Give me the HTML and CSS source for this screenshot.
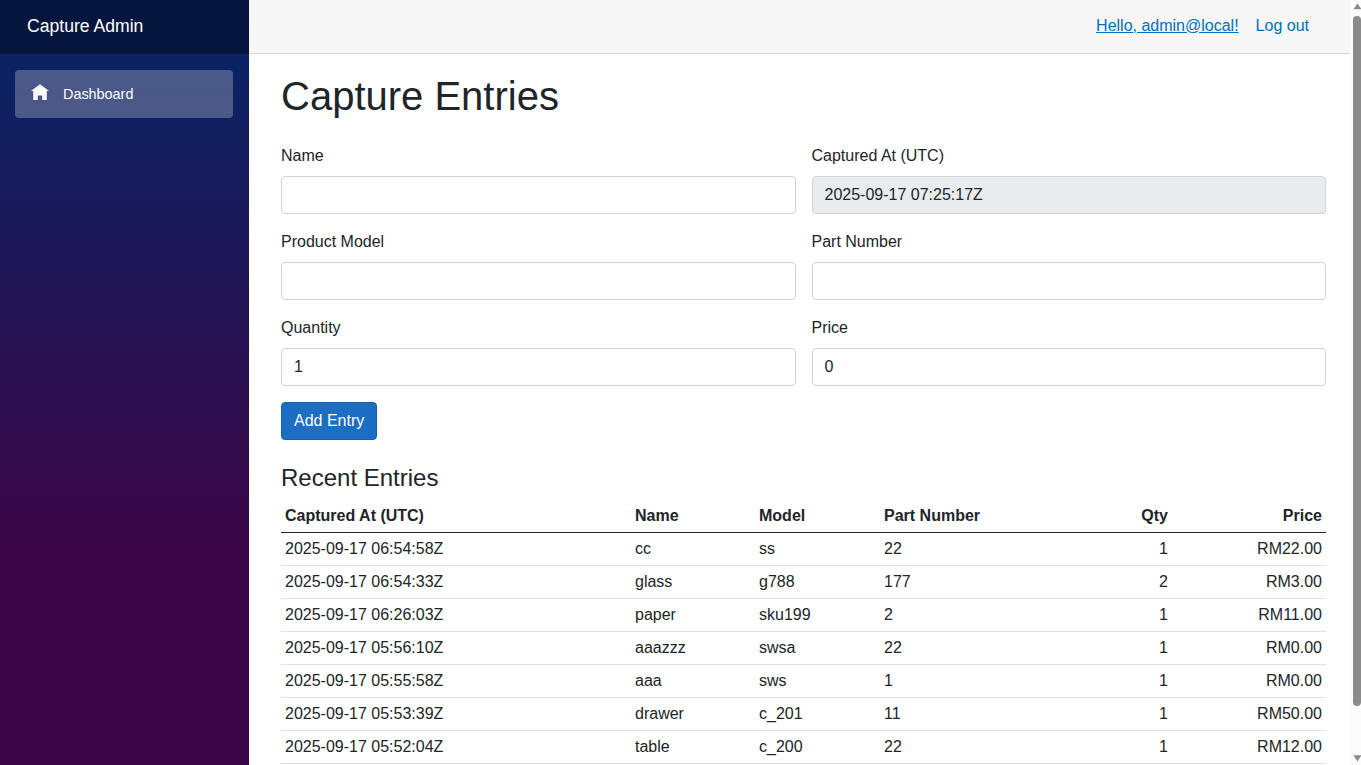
FILE: index.html
```html
<!DOCTYPE html>
<html lang="en">
<head>
<meta charset="utf-8">
<title>Capture Entries</title>
<link rel="stylesheet" href="styles.css">
</head>
<body>
<div class="page">
  <aside class="sidebar">
    <div class="brand-row"><a class="brand">Capture Admin</a></div>
    <nav class="nav">
      <a class="nav-link">
        <svg class="nav-icon" viewBox="0 0 8 7" fill="currentColor"><path d="M4 0l-4 3h1v4h2v-2h2v2h2v-4.03l1 .03-4-3z"/></svg>
        <span>Dashboard</span>
      </a>
    </nav>
  </aside>
  <main class="main">
    <header class="top-row"><a class="user">Hello, admin@local!</a><a class="logout">Log out</a></header>
    <article class="content">
      <h1>Capture Entries</h1>
      <form class="form">
        <label class="field"><span>Name</span><input class="control" type="text"></label>
        <label class="field"><span>Captured At (UTC)</span><input class="control" type="text" value="2025-09-17 07:25:17Z" disabled></label>
        <label class="field"><span>Product Model</span><input class="control" type="text"></label>
        <label class="field"><span>Part Number</span><input class="control" type="text"></label>
        <label class="field"><span>Quantity</span><input class="control" type="text" value="1"></label>
        <label class="field"><span>Price</span><input class="control" type="text" value="0"></label>
        <div class="actions"><button class="btn" type="button">Add Entry</button></div>
      </form>
      <h4>Recent Entries</h4>
      <table class="table">
        <colgroup><col class="c-date"><col class="c-name"><col class="c-model"><col class="c-part"><col class="c-qty"><col class="c-price"></colgroup>
        <thead><tr><th>Captured At (UTC)</th><th>Name</th><th>Model</th><th>Part Number</th><th class="num">Qty</th><th class="num">Price</th></tr></thead>
        <tbody>
          <tr><td>2025-09-17 06:54:58Z</td><td>cc</td><td>ss</td><td>22</td><td class="num">1</td><td class="num">RM22.00</td></tr>
          <tr><td>2025-09-17 06:54:33Z</td><td>glass</td><td>g788</td><td>177</td><td class="num">2</td><td class="num">RM3.00</td></tr>
          <tr><td>2025-09-17 06:26:03Z</td><td>paper</td><td>sku199</td><td>2</td><td class="num">1</td><td class="num">RM11.00</td></tr>
          <tr><td>2025-09-17 05:56:10Z</td><td>aaazzz</td><td>swsa</td><td>22</td><td class="num">1</td><td class="num">RM0.00</td></tr>
          <tr><td>2025-09-17 05:55:58Z</td><td>aaa</td><td>sws</td><td>1</td><td class="num">1</td><td class="num">RM0.00</td></tr>
          <tr><td>2025-09-17 05:53:39Z</td><td>drawer</td><td>c_201</td><td>11</td><td class="num">1</td><td class="num">RM50.00</td></tr>
          <tr><td>2025-09-17 05:52:04Z</td><td>table</td><td>c_200</td><td>22</td><td class="num">1</td><td class="num">RM12.00</td></tr>
        </tbody>
      </table>
    </article>
  </main>
  <div class="scrollbar">
    <svg class="arrow" viewBox="0 0 8 7"><path d="M4.5 0.5 8.5 6.2H0.4z"/></svg>
    <div class="thumb"></div>
    <svg class="arrow" viewBox="0 0 8 7"><path d="M4.5 6.5 8.5 0.2H0.4z"/></svg>
  </div>
</div>
</body>
</html>
```
FILE: styles.css
```css
* { box-sizing: border-box; }
body {
  margin: 0;
  font: 16px/1.5 "Liberation Sans", Arial, sans-serif;
  color: #212529;
  background: #fff;
  overflow: hidden;
}
.page { display: flex; height: 765px; overflow: hidden; }

.sidebar {
  width: 249px;
  flex: none;
  background: linear-gradient(180deg, rgb(5, 39, 103) 0%, #3a0647 70%);
}
.brand-row {
  height: 54px;
  display: flex;
  align-items: center;
  padding: 0 0 2px 27px;
  background: rgba(0, 0, 0, 0.4);
}
.brand { font-size: 17.6px; color: #fff; }
.nav { padding: 16px 16px 0 15px; }
.nav-link {
  display: flex;
  align-items: center;
  height: 48px;
  padding-left: 16px;
  gap: 14px;
  border-radius: 4px;
  font-size: 14.4px;
  color: #fff;
  background: rgba(255, 255, 255, 0.25);
}
.nav-link span { padding-top: 1px; }
.nav-icon { width: 18px; height: 16px; margin-bottom: 4px; }

.main { flex: 1; min-width: 0; }
.top-row {
  height: 54px;
  display: flex;
  justify-content: flex-end;
  align-items: center;
  gap: 17px;
  padding: 0 41px 2px 0;
  border-bottom: 1px solid #d6d5d5;
  background: #f7f7f7;
  color: #0071c1;
}
.user { text-decoration: underline; }
.content { padding: 17.6px 24px 0 32px; }
h1 { margin: 0 0 24px; font-size: 40px; font-weight: 400; line-height: 48px; }
h4 { margin: 24px 0 8px; font-size: 24px; font-weight: 400; line-height: 28.8px; }

.form { display: grid; grid-template-columns: 1fr 1fr; gap: 16px; }
.field { display: flex; flex-direction: column; gap: 8px; }
.control {
  width: 100%;
  height: 38px;
  padding: 6px 12px;
  border: 1px solid #ced4da;
  border-radius: 4px;
  background: #fff;
  font: inherit;
  color: #212529;
}
.control:disabled { background: #e9ecef; }
.actions { grid-column: 1 / -1; display: flex; }
.btn {
  height: 38px;
  padding: 0 12px;
  border: 1px solid #1861ac;
  border-radius: 4px;
  background: #1b6ec2;
  color: #fff;
  font: inherit;
}

.table { width: 100%; table-layout: fixed; border-collapse: collapse; }
.c-date { width: 350px; }
.c-name { width: 124px; }
.c-model { width: 125px; }
.c-part { width: 184px; }
.c-qty { width: 108px; }
.table th, .table td { padding: 4px; text-align: left; border-bottom: 1px solid #dee2e6; }
.table th { font-weight: 700; border-bottom-color: #212529; }
.table .num { text-align: right; }

.scrollbar {
  width: 11px;
  flex: none;
  display: flex;
  flex-direction: column;
  padding: 3px 0 3px 3px;
  background: #fcfcfc;
}
.arrow { width: 8px; height: 7px; fill: #8b8b8b; flex: none; }
.thumb { height: 690px; margin: 6px 0 auto; border-radius: 4px; background: #8b8b8b; }
```
